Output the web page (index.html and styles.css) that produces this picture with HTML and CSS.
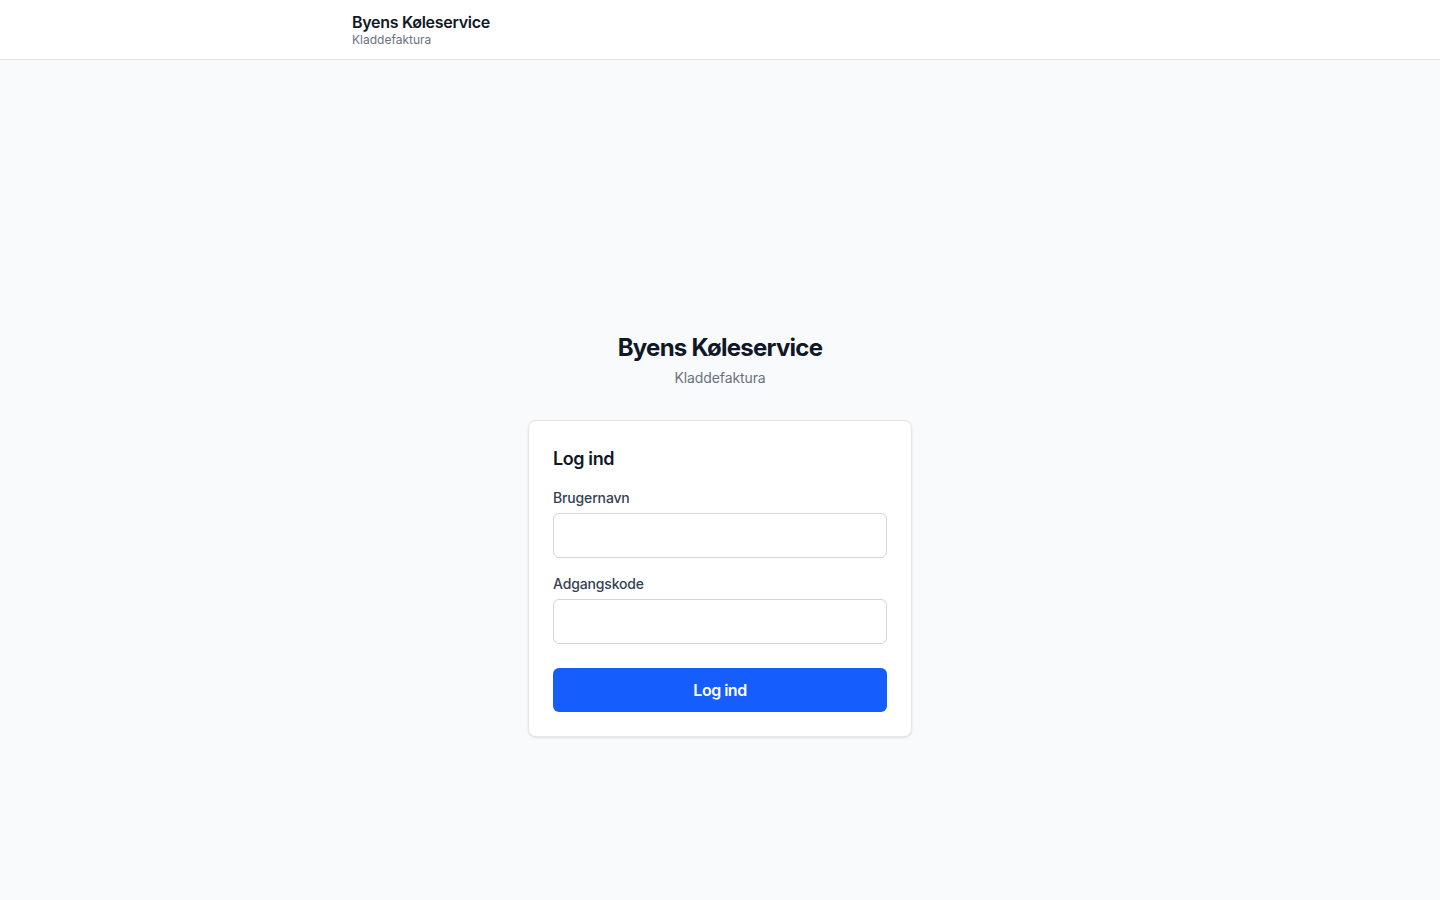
FILE: index.html
```html
<!DOCTYPE html>
<html lang="da">
<head>
<meta charset="utf-8">
<title>Log ind – Byens Køleservice</title>
<link rel="stylesheet" href="styles.css">
</head>
<body>
<header class="topbar">
  <div class="topbar-inner">
    <div class="brand-name">Byens Køleservice</div>
    <div class="brand-sub">Kladdefaktura</div>
  </div>
</header>
<main class="main">
  <div class="login-wrap">
    <div class="intro">
      <h1 class="intro-title">Byens Køleservice</h1>
      <p class="intro-sub">Kladdefaktura</p>
    </div>
    <form class="card">
      <h2 class="card-title">Log ind</h2>
      <div class="field">
        <label class="label" for="u">Brugernavn</label>
        <input class="input" id="u" type="text">
      </div>
      <div class="field">
        <label class="label" for="p">Adgangskode</label>
        <input class="input" id="p" type="password">
      </div>
      <button class="btn" type="button">Log ind</button>
    </form>
  </div>
</main>
</body>
</html>
```

FILE: styles.css
```css
* { box-sizing: border-box; }
html, body { margin: 0; padding: 0; }
body {
  font-family: Inter, "Noto Sans", sans-serif;
  background: #f9fafb;
  color: #101828;
  min-height: 900px;
}
.topbar {
  background: #ffffff;
  border-bottom: 1px solid #e5e7eb;
  height: 60px;
}
.topbar-inner {
  max-width: 736px;
  margin: 0 auto;
  padding-top: 12px;
  display: flex;
  flex-direction: column;
}
.brand-name {
  font-size: 16px;
  font-weight: 600;
  line-height: 20px;
  letter-spacing: -0.3px;
  color: #101828;
}
.brand-sub {
  font-size: 12px;
  line-height: 16px;
  color: #6a7282;
}
.main {
  display: flex;
  justify-content: center;
  padding-top: 272px;
}
.login-wrap {
  width: 384px;
  display: flex;
  flex-direction: column;
}
.intro {
  text-align: center;
  margin-bottom: 32px;
}
.intro-title {
  margin: 0;
  font-size: 24px;
  line-height: 32px;
  font-weight: 700;
  letter-spacing: -0.75px;
  color: #101828;
}
.intro-sub {
  margin: 4px 0 0;
  font-size: 14px;
  line-height: 20px;
  letter-spacing: -0.1px;
  color: #6a7282;
}
.card {
  background: #ffffff;
  border: 1px solid #e5e7eb;
  border-radius: 8px;
  box-shadow: 0 1px 3px rgba(0,0,0,0.08), 0 1px 2px -1px rgba(0,0,0,0.08);
  padding: 24px;
  display: flex;
  flex-direction: column;
}
.card-title {
  margin: 0;
  font-size: 18px;
  line-height: 28px;
  font-weight: 600;
  letter-spacing: -0.4px;
  color: #101828;
}
.field {
  display: flex;
  flex-direction: column;
  margin-top: 15px;
}
.field + .field { margin-top: 16px; }
.label {
  font-size: 14px;
  line-height: 20px;
  font-weight: 500;
  letter-spacing: -0.15px;
  color: #364153;
  margin-bottom: 5px;
}
.input {
  height: 45px;
  width: 100%;
  border: 1px solid #d1d5dc;
  border-radius: 6px;
  background: #fff;
  font: inherit;
  padding: 0 12px;
  outline: none;
}
.btn {
  margin-top: 24px;
  height: 44px;
  width: 100%;
  border: 0;
  border-radius: 6px;
  background: #155dfc;
  color: #ffffff;
  font-family: Inter, "Noto Sans", sans-serif;
  font-size: 16px;
  font-weight: 600;
  letter-spacing: -0.5px;
  cursor: pointer;
}
```
